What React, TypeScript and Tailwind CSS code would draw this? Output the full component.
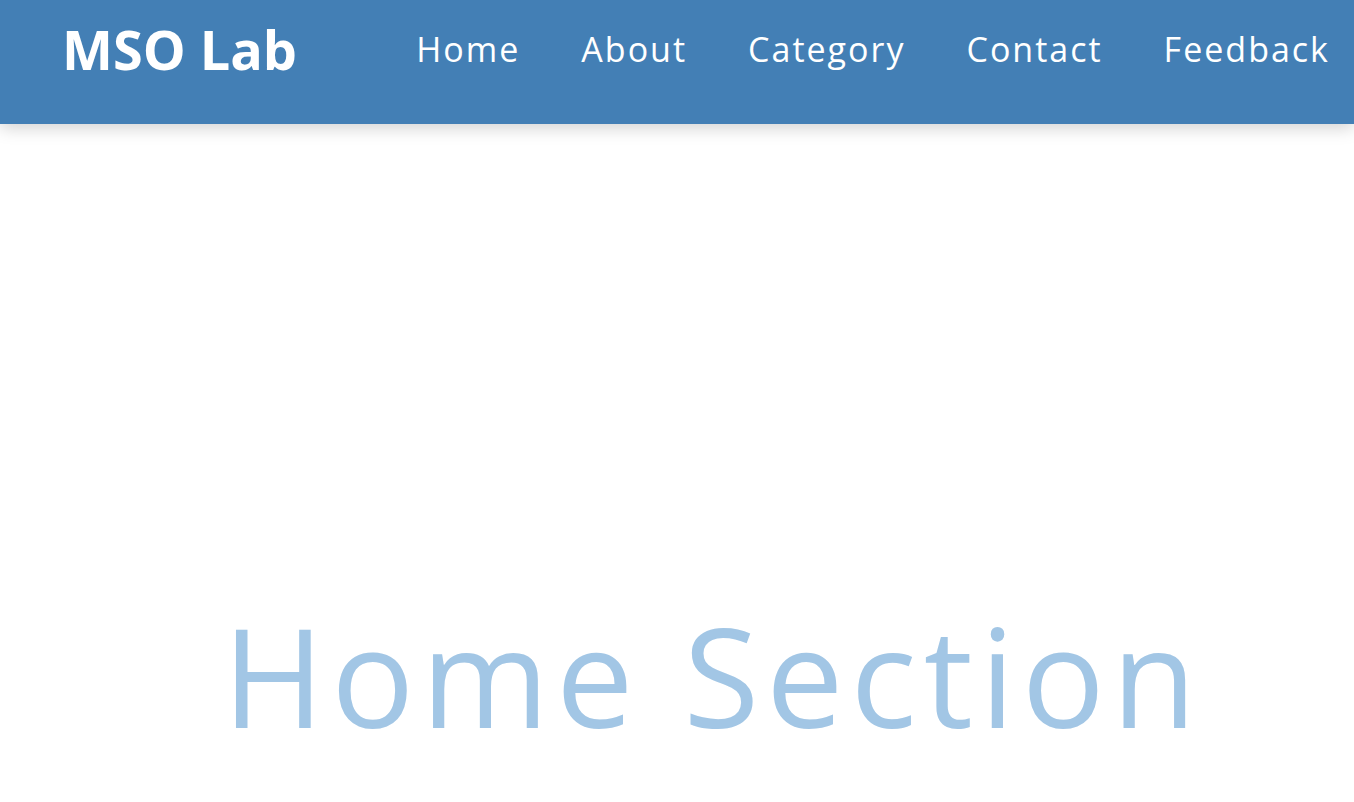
import React from "react";

export default function App() {
  const links = ["Home", "About", "Category", "Contact", "Feedback"];
  return (
    <div className="min-h-[802px] w-full bg-white overflow-hidden" style={{ fontFamily: '"Open Sans", sans-serif' }}>
      <header className="h-[124px] bg-[#437fb5] shadow-[0_4px_16px_rgba(0,0,0,0.18)] flex items-start justify-between pl-[62px] pr-[24px] pt-[14px] relative z-10">
        <div className="text-white font-bold text-[54px] leading-[70px] tracking-[0px]">MSO Lab</div>
        <nav className="flex items-center gap-[61px] pt-[7px]">
          {links.map((l) => (
            <a key={l} className="text-white font-medium text-[34px] leading-[56px] tracking-[2px]">{l}</a>
          ))}
        </nav>
      </header>
      <main className="flex justify-center pl-[72px] pt-[470px]">
        <h1 className="text-[#a2c6e5] text-[138px] leading-[160px] font-normal tracking-[7px]">Home Section</h1>
      </main>
    </div>
  );
}
